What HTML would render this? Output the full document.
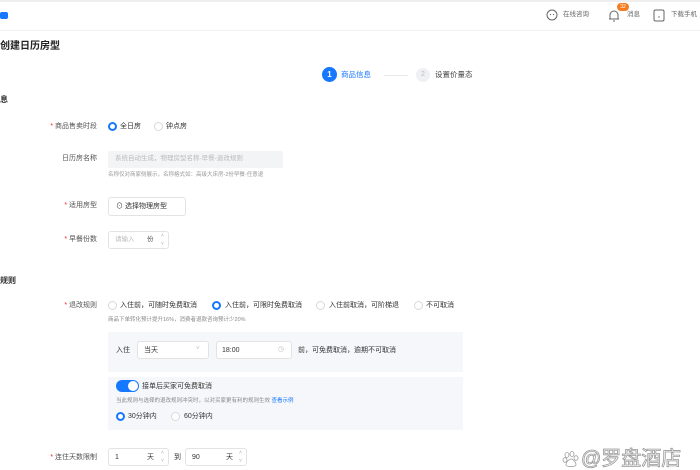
<!DOCTYPE html>
<html><head><meta charset="utf-8"><style>
*{margin:0;padding:0;box-sizing:border-box}
body{width:700px;height:470px;overflow:hidden;background:#fff;font-family:"Liberation Sans","Noto Sans CJK SC",sans-serif;color:#333;position:relative}
.a{position:absolute;white-space:nowrap;line-height:1}
.s7{font-size:7px}.s6{font-size:5.5px;color:#999}
.lab{font-size:7px;color:#555;text-align:right;width:100px;left:0}
.lab b{color:#f5222d;font-weight:normal}
.r{position:absolute;width:9px;height:9px;border:1px solid #d9d9d9;border-radius:50%;background:#fff}
.r.on{border:2.5px solid #1677ff}
.box{position:absolute;border:1px solid #e3e3e3;border-radius:3px;background:#fff}
.blue{color:#1677ff}
</style></head><body>
<div class="a" style="left:0;top:0;width:700px;height:2px;background:#eee"></div>
<div class="a" style="left:0;top:30px;width:700px;height:1px;background:#f0f0f0"></div>
<div class="a" style="left:0;top:12px;width:8px;height:7px;background:#1677ff;border-radius:2px"></div>
<svg class="a" style="left:546px;top:9px" width="12" height="12" viewBox="0 0 12 12"><circle cx="6" cy="6" r="5" fill="none" stroke="#666" stroke-width="1"/><circle cx="4.5" cy="5.5" r=".6" fill="#666"/><circle cx="7.5" cy="5.5" r=".6" fill="#666"/></svg>
<div class="a s7" style="left:563px;top:12px;color:#666;font-size:6.5px">在线咨询</div>
<svg class="a" style="left:608px;top:9px" width="12" height="13" viewBox="0 0 12 13"><path d="M2 10V6a4 4 0 0 1 8 0v4H2zM1 10h10M5 12h2" fill="none" stroke="#666" stroke-width="1"/></svg>
<div class="a" style="left:617px;top:3px;width:12px;height:8px;border-radius:4px;background:#f57c1f;color:#fff;font-size:5px;text-align:center;line-height:8px">32</div>
<div class="a s7" style="left:627px;top:12px;color:#666;font-size:6.5px">消息</div>
<svg class="a" style="left:653px;top:9px" width="12" height="13" viewBox="0 0 12 13"><rect x="1" y="1" width="10" height="11" rx="1.5" fill="none" stroke="#666"/><circle cx="6" cy="8" r=".7" fill="#666"/></svg>
<div class="a s7" style="left:671px;top:12px;color:#666;font-size:6.5px">下载手机</div>
<div class="a" style="left:0;top:42px;font-size:10px;font-weight:bold;color:#222">创建日历房型</div>
<div class="a" style="left:322px;top:67px;width:15px;height:15px;border-radius:50%;background:#1677ff;color:#fff;font-size:8px;text-align:center;line-height:15px;font-weight:bold">1</div>
<div class="a blue" style="left:341px;top:71px;font-size:7.5px">商品信息</div>
<div class="a" style="left:384px;top:75px;width:24px;height:1px;background:#e8e8e8"></div>
<div class="a" style="left:416px;top:68px;width:14px;height:14px;border-radius:50%;background:#eef0f4;color:#bbb;font-size:7px;text-align:center;line-height:14px">2</div>
<div class="a" style="left:435px;top:71px;font-size:7.5px;color:#444">设置价量态</div>
<div class="a" style="left:0;top:96px;font-size:8px;font-weight:bold">息</div>
<div class="a lab" style="top:123px;width:97px"><b>* </b>商品售卖时段</div>
<div class="r on" style="left:108px;top:122px"></div><div class="a s7" style="left:120px;top:123px">全日房</div>
<div class="r" style="left:154px;top:122px"></div><div class="a s7" style="left:166px;top:123px">钟点房</div>
<div class="a lab" style="top:155px;width:97px">日历房名称</div>
<div class="a" style="left:108px;top:151px;width:175px;height:17px;background:#f3f4f6;border-radius:2px"></div>
<div class="a" style="left:115px;top:156px;font-size:6.5px;color:#bbb">系统自动生成，物理房型名称-早餐-退改规则</div>
<div class="a s6" style="left:108px;top:173px">名称仅对商家侧展示，名称格式如：高级大床房-2份早餐-任意退</div>
<div class="a lab" style="top:202px;width:97px"><b>* </b>适用房型</div>
<div class="box" style="left:108px;top:197px;width:78px;height:19px"></div>
<div class="a s7" style="left:116px;top:203px">⊙ 选择物理房型</div>
<div class="a lab" style="top:236px;width:97px"><b>* </b>早餐份数</div>
<div class="box" style="left:108px;top:231px;width:61px;height:18px"></div>
<div class="a" style="left:115px;top:237px;font-size:6.5px;color:#bbb">请输入</div>
<div class="a" style="left:147px;top:237px;font-size:6.5px;color:#555">份</div>
<div class="a" style="left:161px;top:232px;font-size:5px;color:#aaa;line-height:8px">˄<br>˅</div>
<div class="a" style="left:0;top:277px;font-size:8px;font-weight:bold">规则</div>
<div class="a lab" style="top:302px;width:97px"><b>* </b>退改规则</div>
<div class="r" style="left:108px;top:301px"></div><div class="a s7" style="left:120px;top:302px">入住前，可随时免费取消</div>
<div class="r on" style="left:212px;top:301px"></div><div class="a s7" style="left:225px;top:302px">入住前，可限时免费取消</div>
<div class="r" style="left:316px;top:301px"></div><div class="a s7" style="left:329px;top:302px">入住前取消，可阶梯退</div>
<div class="r" style="left:414px;top:301px"></div><div class="a s7" style="left:426px;top:302px">不可取消</div>
<div class="a s6" style="left:108px;top:318px;color:#888">商品下单转化预计提升16%，消费者退款咨询预计少20%</div>
<div class="a" style="left:108px;top:332px;width:355px;height:40px;background:#f5f7fa"></div>
<div class="a s7" style="left:116px;top:347px">入住</div>
<div class="box" style="left:137px;top:341px;width:72px;height:18px"></div>
<div class="a s7" style="left:144px;top:347px">当天</div><div class="a" style="left:196px;top:346px;font-size:6px;color:#bbb">˅</div>
<div class="box" style="left:216px;top:341px;width:76px;height:18px"></div>
<div class="a s7" style="left:222px;top:347px">18:00</div><div class="a" style="left:278px;top:346px;font-size:7px;color:#bbb">◷</div>
<div class="a s7" style="left:298px;top:347px">前，可免费取消，逾期不可取消</div>
<div class="a" style="left:108px;top:377px;width:355px;height:53px;background:#f5f7fa"></div>
<div class="a" style="left:116px;top:380px;width:23px;height:12px;border-radius:6px;background:#1677ff"></div>
<div class="a" style="left:128px;top:381px;width:10px;height:10px;border-radius:50%;background:#fff"></div>
<div class="a s7" style="left:142px;top:383px">接单后买家可免费取消</div>
<div class="a s6" style="left:116px;top:399px;color:#888">当此规则与选择的退改规则冲突时，以对买家更有利的规则生效 <span class="blue">查看示例</span></div>
<div class="r on" style="left:116px;top:412px"></div><div class="a s7" style="left:128px;top:413px">30分钟内</div>
<div class="r" style="left:171px;top:412px"></div><div class="a s7" style="left:184px;top:413px">60分钟内</div>
<div class="a lab" style="top:454px;width:97px"><b>* </b>连住天数限制</div>
<div class="box" style="left:108px;top:448px;width:61px;height:18px"></div>
<div class="a s7" style="left:115px;top:454px">1</div><div class="a s7" style="left:147px;top:454px">天</div>
<div class="a" style="left:161px;top:449px;font-size:5px;color:#aaa;line-height:8px">˄<br>˅</div>
<div class="a s7" style="left:174px;top:454px">到</div>
<div class="box" style="left:185px;top:448px;width:62px;height:18px"></div>
<div class="a s7" style="left:192px;top:454px">90</div><div class="a s7" style="left:226px;top:454px">天</div>
<div class="a" style="left:239px;top:449px;font-size:5px;color:#aaa;line-height:8px">˄<br>˅</div>
<svg class="a" style="left:562px;top:450px" width="18" height="18" viewBox="0 0 18 18"><g fill="#fff" stroke="#999" stroke-width=".8"><ellipse cx="5" cy="5" rx="2" ry="2.5"/><ellipse cx="10" cy="4" rx="2" ry="2.5"/><ellipse cx="3" cy="10" rx="2" ry="2.3"/><ellipse cx="14" cy="8" rx="2" ry="2.3"/><path d="M4 15c0-4 4-6 5-6s5 2 5 6c0 2-10 2-10 0z"/></g></svg>
<div class="a" style="left:581px;top:449px;font-size:20px;color:#fff;-webkit-text-stroke:0.8px #999">@罗盘酒店</div>
</body></html>
